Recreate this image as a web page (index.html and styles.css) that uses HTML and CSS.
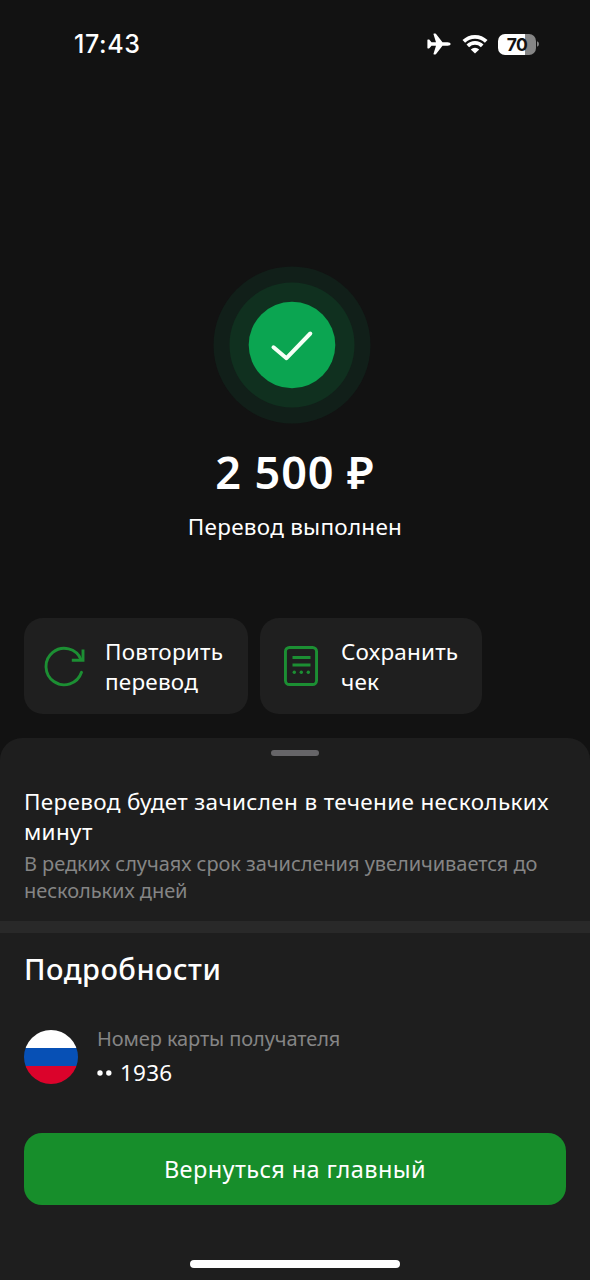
FILE: index.html
```html
<!DOCTYPE html>
<html lang="ru">
<head>
<meta charset="utf-8">
<title>Перевод выполнен</title>
<link rel="stylesheet" href="styles.css">
</head>
<body>
<div class="screen">
  <header class="status-bar">
    <span class="clock">17:43</span>
    <div class="status-icons">
      <svg class="plane" width="24" height="22" viewBox="0 0 24 22"><path fill="#fff" d="M23.6 11c0-1-1.3-1.7-3-1.7h-5.1L9.3 1.2C9 .8 8.700 .6 8.300 .6H7c-.4 0-.6.3-.5.7l2.500 8H4.500L2.600 6.900C2.400 6.600 2.200 6.500 1.900 6.500H.9c-.3 0-.5.2-.5.5v8c0 .3.2.5.5.5h1c.3 0 .5-.1.7-.4l1.900-2.400H9l-2.500 8c-.1.400.1.700.5.700h1.300c.4 0 .7-.2 1-.6l6.200-8.100h5.100c1.700 0 3-.7 3-1.700z"/></svg>
      <svg class="wifi" width="26" height="20" viewBox="0 0 26 20"><g fill="none" stroke="#fff" stroke-width="3.700"><path d="M1.800 7.400a15.900 15.900 0 0 1 22.400 0"/><path d="M5.800 11.900a10.200 10.200 0 0 1 14.400 0"/></g><path fill="#fff" d="M13 19.600l-4.200-4.200a6 6 0 0 1 8.400 0z"/></svg>
      <div class="battery"><div class="battery-body">70</div><svg width="3" height="8" viewBox="0 0 3 8"><path fill="#858585" d="M0 1.200q2 .8 2 2.800T0 6.800z"/></svg></div>
    </div>
  </header>

  <main class="result">
    <svg class="success" width="158" height="158" viewBox="0 0 158 158">
      <circle cx="79" cy="79" r="78.500" fill="#111f19"/>
      <circle cx="79" cy="79" r="62.500" fill="#10301f"/>
      <circle cx="79" cy="79" r="43.300" fill="#0ba551"/>
      <path d="M60.500 81.300L73.500 92.200L97.300 67.500" fill="none" stroke="#f6fff6" stroke-width="4" stroke-linecap="round" stroke-linejoin="round"/>
    </svg>
    <h1 class="amount">2 500 ₽</h1>
    <p class="result-text">Перевод выполнен</p>
  </main>

  <div class="actions">
    <button class="action action-repeat">
      <svg width="42" height="42" viewBox="0 0 42 42" fill="none" stroke="#1c8f33" stroke-width="2.900"><path d="M37.500 26.300A18.200 18.200 0 1 1 37 13.500" stroke-linecap="round"/><path d="M39 3.500V14.300H27.800"/></svg>
      <span>Повторить<br>перевод</span>
    </button>
    <button class="action action-save">
      <svg width="36" height="42" viewBox="0 0 36 42" fill="none" stroke="#1c8f33" stroke-width="2.900"><rect x="2.450" y="1.450" width="31.100" height="37.100" rx="4"/><path d="M9.500 11.500h18M9.500 19h18"/><g fill="#1c8f33" stroke="none"><circle cx="11.300" cy="26.300" r="1.700"/><circle cx="18.300" cy="26.300" r="1.700"/><circle cx="25.300" cy="26.300" r="1.700"/></g></svg>
      <span>Сохранить<br>чек</span>
    </button>
  </div>

  <section class="sheet">
    <div class="grabber"></div>
    <div class="notice">
      <p class="notice-title">Перевод будет зачислен в течение нескольких<br>минут</p>
      <p class="notice-text">В редких случаях срок зачисления увеличивается до<br>нескольких дней</p>
    </div>
    <hr class="divider">
    <h2 class="details-title">Подробности</h2>
    <div class="card-row">
      <div class="flag"></div>
      <div class="card-info">
        <span class="card-label">Номер карты получателя</span>
        <span class="card-number"><svg width="15" height="6" viewBox="0 0 15 6" fill="#fff"><circle cx="3" cy="3" r="2.700"/><circle cx="11.800" cy="3" r="2.700"/></svg><span>1936</span></span>
      </div>
    </div>
    <button class="home-button"><span>Вернуться на главный</span></button>
    <div class="home-indicator"></div>
  </section>
</div>
</body>
</html>
```
FILE: styles.css
```css
* { box-sizing: border-box; }
body { margin: 0; background: #121212; color: #fff; font-family: "Noto Sans", sans-serif; }
h1, h2, p { margin: 0; font-weight: 450; white-space: nowrap; }
button { border: 0; padding: 0; color: inherit; font: inherit; text-align: left; }
svg { display: block; flex: none; }
.screen { width: 590px; height: 1280px; display: flex; flex-direction: column; overflow: hidden; }

.status-bar { height: 88px; padding: 0 50px 0 74px; display: flex; align-items: center; justify-content: space-between; }
.clock { font: 550 25px/30px Inter, sans-serif; letter-spacing: 0.6px; }
.status-icons { display: flex; align-items: center; }
.wifi { margin-left: 11px; }
.battery { display: flex; align-items: center; gap: 1px; margin-left: 10px; }
.battery-body { width: 38px; height: 21px; border-radius: 7px; background: linear-gradient(90deg, #fff 70%, #858585 70%); color: #121212; font: 700 17.5px/21px Inter, sans-serif; text-align: center; letter-spacing: -0.5px; }

.result { height: 530px; padding-top: 178px; display: flex; flex-direction: column; align-items: center; }
.success { margin-right: 6px; }
.amount { margin-top: 18px; font-size: 45px; line-height: 60px; font-weight: 600; letter-spacing: 0.9px; }
.result-text { margin-top: 10px; font-size: 22.5px; line-height: 30px; letter-spacing: 0.25px; }

.actions { display: flex; gap: 12px; padding-left: 24px; }
.action { height: 96px; padding-top: 1px; border-radius: 19px; background: #1f1f1f; display: flex; align-items: center; font-size: 22.5px; line-height: 30px; font-weight: 450; letter-spacing: 0.2px; white-space: nowrap; }
.action-repeat { width: 224px; padding-left: 20px; gap: 19px; }
.action-save { width: 222px; padding-left: 23px; gap: 22px; }

.sheet { margin-top: 24px; flex: 1; border-radius: 22px 22px 0 0; background: #1e1e1e; display: flex; flex-direction: column; }
.grabber { width: 48px; height: 6px; margin: 12px auto 0; border-radius: 3px; background: #666568; }
.notice { height: 165px; padding: 31px 24px 0; }
.notice-title { font-size: 22.5px; line-height: 30px; letter-spacing: 0.34px; }
.notice-text { margin-top: 3px; font-size: 20px; line-height: 27px; font-weight: 400; letter-spacing: -0.05px; color: #858585; }
.divider { width: 100%; height: 12px; margin: 0; border: 0; background: #292929; }
.details-title { margin: 16px 0 0 24px; font-size: 29px; line-height: 40px; font-weight: 550; letter-spacing: 0.5px; }
.card-row { display: flex; gap: 19px; height: 54px; margin: 41px 0 0 24px; }
.flag { width: 54px; height: 54px; border-radius: 50%; background: linear-gradient(#fff 34%, #0750b5 34% 67%, #db032b 67%); }
.card-info { display: flex; flex-direction: column; margin-top: -5px; white-space: nowrap; }
.card-label { font-size: 20px; line-height: 28px; letter-spacing: -0.1px; color: #858585; }
.card-number { display: flex; align-items: center; gap: 8px; margin-top: 5px; font-size: 22.5px; line-height: 30px; letter-spacing: 0.2px; }
.home-button { height: 72px; margin: 49px 24px 0; border-radius: 18px; background: #178e2b; text-align: center; font-size: 23.5px; line-height: 30px; font-weight: 420; letter-spacing: 0.42px; }
.home-indicator { width: 210px; height: 8px; margin: 55px auto 0; border-radius: 4px; background: #fff; }
```
